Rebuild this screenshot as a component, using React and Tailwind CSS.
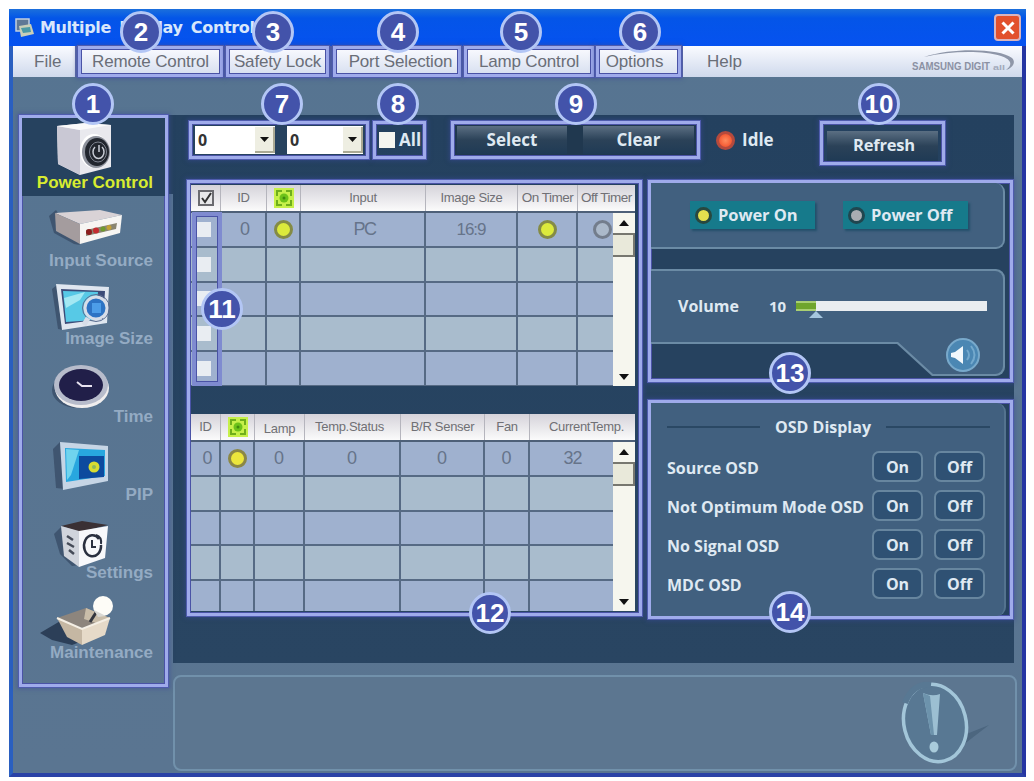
import React from 'react';

const Frame = ({ className = '', children }) => (
    <div className={`relative shrink-0 border-[3px] border-[#9fabeb] shadow-[0_0_0_1px_#4f5cae,0_0_4px_2px_#3a4a9a80,inset_0_0_0_1px_#4a53a6] ${className}`}>
        {children}
    </div>
);

const badges = [
    { n: 1, pos: 'left-[72px] top-[83px]' },
    { n: 2, pos: 'left-[120px] top-[11px]' },
    { n: 3, pos: 'left-[252px] top-[11px]' },
    { n: 4, pos: 'left-[377px] top-[11px]' },
    { n: 5, pos: 'left-[500px] top-[11px]' },
    { n: 6, pos: 'left-[619px] top-[11px]' },
    { n: 7, pos: 'left-[261px] top-[83px]' },
    { n: 8, pos: 'left-[377px] top-[83px]' },
    { n: 9, pos: 'left-[555px] top-[83px]' },
    { n: 10, pos: 'left-[858px] top-[83px]' },
    { n: 11, pos: 'left-[201px] top-[288px]' },
    { n: 12, pos: 'left-[469px] top-[592px]' },
    { n: 13, pos: 'left-[769px] top-[352px]' },
    { n: 14, pos: 'left-[769px] top-[591px]' },
];

const menu = [
    { label: 'Remote Control', box: 'ml-[3px] w-[145px]' },
    { label: 'Safety Lock', box: 'ml-[3px] w-[103px]' },
    { label: 'Port Selection', box: 'ml-[4px] w-[128px] pl-[7px]' },
    { label: 'Lamp Control', box: 'ml-[3px] w-[130px]' },
    { label: 'Options', box: 'ml-[2px] w-[85px] pr-[8px]' },
];

const PowerIcon = () => (
    <svg viewBox="21 116 144 56" className="h-14 w-36 shrink-0 overflow-visible">
        <path d="M57 124 L86 121 L111 123 L111 165 L80 173 L58 162 Z" fill="#e9e9ee" />
        <path d="M57 124 L80 128 L80 173 L58 162 Z" fill="#c9c8d4" />
        <path d="M57 124 L86 121 L111 123 L80 128 Z" fill="#fafafa" />
        <ellipse cx="94" cy="149" rx="14" ry="17" fill="#fff" />
        <ellipse cx="96" cy="150" rx="14" ry="16" fill="#8e929c" />
        <ellipse cx="97" cy="150" rx="12" ry="14" fill="#22262e" />
        <ellipse cx="98" cy="150" rx="8.500" ry="10" fill="none" stroke="#7f8490" strokeWidth="1" />
        <path d="M95 145 a5.500 6.500 0 1 0 7 0 M99 143 v7" fill="none" stroke="#c9cdd6" strokeWidth="1.500" />
    </svg>
);

const InputIcon = () => (
    <svg viewBox="21 194 144 56" className="h-14 w-36 shrink-0 overflow-visible">
        <path d="M49 214 L56 208 L80 243 L74 242 L54 231 Z" fill="#3f5570" />
        <path d="M55 211 L100 208 L122 213 L80 222 Z" fill="#d9d3d6" />
        <path d="M55 211 L80 222 L80 242 L56 229 Z" fill="#a49c9e" />
        <path d="M80 222 L122 213 L120 231 L80 242 Z" fill="#f7f5f2" />
        <path d="M86 228 L117 221 L116 227 L86 234 Z" fill="#8a8570" />
        <circle cx="89" cy="230" r="3" fill="#8c1d1d" />
        <circle cx="96" cy="228.500" r="3" fill="#c42c30" />
        <circle cx="103" cy="227" r="2.500" fill="#6f9a2d" />
        <circle cx="109" cy="225.500" r="2.500" fill="#c3a135" />
    </svg>
);

const ImageIcon = () => (
    <svg viewBox="21 272 144 56" className="h-14 w-36 shrink-0 overflow-visible">
        <path d="M52 287 L57 283 L64 328 L58 327 Z" fill="#3f5570" />
        <path d="M56 282 L109 285 L107 321 L62 328 Z" fill="#dfe6ef" />
        <path d="M61 287 L105 289 L103 317 L65 322 Z" fill="#3b4b78" />
        <path d="M63 289 L98 290 L95 318 L66 320 Z" fill="#57c9e6" />
        <path d="M64 296 L85 290 L80 298 L66 306 Z" fill="#a3e8f3" />
        <circle cx="96" cy="306" r="11" fill="#2d73c4" stroke="#d7dde8" strokeWidth="3" />
        <circle cx="96" cy="306" r="13.500" fill="none" stroke="#5a6c90" strokeWidth="1" />
        <rect x="92" y="301" width="9" height="10" fill="#4d9de8" />
        <path d="M88 316 L84 323" stroke="#d7dde8" strokeWidth="5" />
    </svg>
);

const TimeIcon = () => (
    <svg viewBox="21 350 144 56" className="h-14 w-36 shrink-0 overflow-visible">
        <ellipse cx="78" cy="388" rx="26" ry="18" fill="#3f5570" />
        <ellipse cx="82" cy="386" rx="27" ry="20" fill="#f0eeee" />
        <ellipse cx="81" cy="383" rx="27" ry="20" fill="#b7bccb" />
        <ellipse cx="81" cy="383" rx="22" ry="16" fill="#211f49" />
        <path d="M77 380 L82 384 L92 384" fill="none" stroke="#e8e3f0" strokeWidth="2" />
    </svg>
);

const PipIcon = () => (
    <svg viewBox="21 428 144 56" className="h-14 w-36 shrink-0 overflow-visible">
        <path d="M53 447 L60 440 L65 487 L56 486 Z" fill="#3f5570" />
        <path d="M60 440 L108 444 L108 479 L63 488 Z" fill="#c6d5e5" />
        <path d="M65 446 L105 448 L105 474 L66 480 Z" fill="#28a7df" />
        <path d="M66 447 L79 448 L71 473 L67 478 Z" fill="#70d4ee" />
        <path d="M79 454 L104 454 L104 475 L79 477 Z" fill="#0d4a9e" />
        <circle cx="94" cy="465" r="5.500" fill="#d7dc32" />
        <circle cx="94" cy="465" r="2" fill="#8fb95b" />
    </svg>
);

const SettingsIcon = () => (
    <svg viewBox="21 506 144 56" className="h-14 w-36 shrink-0 overflow-visible">
        <path d="M54 532 L62 524 L80 563 L72 564 L60 552 Z" fill="#3f5570" />
        <path d="M61 524 L82 519 L108 523 L80 530 Z" fill="#3a3034" />
        <path d="M61 524 L79 529 L79 565 L64 554 Z" fill="#d0d4dc" />
        <path d="M79 529 L108 524 L105 556 L79 565 Z" fill="#f7f8fb" />
        <path d="M99 537 a8.500 10.500 0 1 0 2 6" fill="none" stroke="#2a3040" strokeWidth="2.500" />
        <path d="M92 538 v7 h4 M96 533 q6 2 5 9" fill="none" stroke="#2a3040" strokeWidth="2" />
        <path d="M67 534 l6 4 M67 541 l7 4 M69 548 l5 4" stroke="#454b58" strokeWidth="2.500" />
    </svg>
);

const MaintenanceIcon = () => (
    <svg viewBox="21 587 144 56" className="h-14 w-36 shrink-0 overflow-visible">
        <path d="M40 632 L62 619 L80 641 L72 644 L52 639 Z" fill="#2c3f58" />
        <path d="M57 617 L86 607 L110 617 L82 627 Z" fill="#8d857d" />
        <path d="M86 607 L84 618 L96 622 L110 617 Z" fill="#c9bda9" />
        <path d="M90 621 L97 610" stroke="#33363e" strokeWidth="3" />
        <path d="M57 617 L82 628 L82 644 L67 636 Z" fill="#c5b7a3" />
        <path d="M82 628 L110 617 L105 634 L82 644 Z" fill="#e6dac8" />
        <path d="M57 617 L82 628 L110 617" fill="none" stroke="#f5efe4" strokeWidth="2" />
        <circle cx="103" cy="605" r="10" fill="#fdfcf7" />
        <path d="M94 609 L98 616 L106 615 Z" fill="#d9d8d3" />
    </svg>
);

const nav = [
    { label: 'Power Control', Icon: PowerIcon, style: 'bg-[#26425f] text-[#d8ec30]' },
    { label: 'Input Source', Icon: InputIcon, style: 'text-[#94abc3]' },
    { label: 'Image Size', Icon: ImageIcon, style: 'text-[#94abc3]' },
    { label: 'Time', Icon: TimeIcon, style: 'text-[#94abc3]' },
    { label: 'PIP', Icon: PipIcon, style: 'text-[#94abc3]' },
    { label: 'Settings', Icon: SettingsIcon, style: 'text-[#94abc3]' },
    { label: 'Maintenance', Icon: MaintenanceIcon, style: 'mt-[2px] text-[#94abc3]' },
];

const StatusIcon = () => (
    <svg viewBox="0 0 20 20" className="h-5 w-5">
        <rect width="20" height="20" fill="#c6f04a" />
        <path d="M3 8 V3 H8 M12 3 H17 V8 M17 12 V17 H12 M8 17 H3 V12" fill="none" stroke="#6fae1c" strokeWidth="2" />
        <circle cx="10" cy="10" r="4.500" fill="#6cc21a" />
        <circle cx="10" cy="10" r="1.500" fill="#3f8a10" />
    </svg>
);

const CheckIcon = () => (
    <svg viewBox="0 0 16 16" className="h-4 w-4">
        <rect x="1" y="1" width="14" height="14" fill="#e8e8ea" stroke="#6b6b70" strokeWidth="2" />
        <path d="M4 8 L7 12 L13 3" fill="none" stroke="#333" strokeWidth="2" />
    </svg>
);

const Lamp = ({ color = 'bg-[#dcea3c] border-[#848b45]' }) => (
    <span className={`block h-[19px] w-[19px] rounded-full border-[3px] ${color}`} />
);

const ScrollBar = () => (
    <div className="absolute right-0 top-0 bottom-0 flex w-[22px] flex-col items-center bg-[#f6f6ee]">
        <svg viewBox="0 0 10 6" className="mt-[7px] h-[6px] w-[10px]"><path d="M0 6 L5 0 L10 6 Z" fill="#111" /></svg>
        <div className="mt-[7px] h-[24px] w-full border-y-2 border-r-2 border-[#77776f] bg-[#e9e9da]" />
        <svg viewBox="0 0 10 6" className="mt-auto mb-[6px] h-[6px] w-[10px]"><path d="M0 0 L5 6 L10 0 Z" fill="#111" /></svg>
    </div>
);

const Grid = ({ cols, head, rows, height, className = '' }) => (
    <div className={`w-[444px] ${className}`}>
        <div className={`grid h-[26px] bg-linear-to-b from-[#d5d3da] to-[#fbfbfb] text-[13px] tracking-[-0.3px] text-[#707075] ${cols}`}>
            {head.map((h, i) => (
                <div key={i} className="flex items-center justify-center border-r border-[#b5b5bd] whitespace-nowrap last:border-r-0">{h}</div>
            ))}
        </div>
        <div className={`relative overflow-hidden border-t-2 border-[#4e6078] ${height}`}>
            {[0, 1, 2, 3, 4].map((r) => (
                <div key={r} className={`grid h-[34.8px] text-[18px] text-[#66748a] odd:bg-[#9fb1cf] even:bg-[#a9bccd] ${cols}`}>
                    {rows[r].map((c, i) => (
                        <div key={i} className="flex items-center justify-center border-r-2 border-b-2 border-[#566a84]">{c}</div>
                    ))}
                </div>
            ))}
            <ScrollBar />
        </div>
    </div>
);

const Box = () => <span className="mr-[3px] block h-[15px] w-[14px] bg-[#e9edf2]" />;

const deviceHead = [
    <CheckIcon />, 'ID', <StatusIcon />, 'Input', 'Image Size',
    <span className="text-[13.5px] tracking-[-0.5px]">On Timer</span>,
    <span className="text-[13.5px] tracking-[-0.5px]">Off Timer</span>,
];
const deviceRows = [
    [<Box />, <span className="pl-1">0</span>, <Lamp />, <span className="pl-1 tracking-[-1.5px]">PC</span>, <span className="text-[17px] tracking-[-1px]">16:9</span>, <Lamp />,
        <span className="mr-[6px]"><Lamp color="bg-[#abb9ca] border-[#737d8c]" /></span>],
    [<Box />, '', '', '', '', '', ''],
    [<Box />, '', '', '', '', '', ''],
    [<Box />, '', '', '', '', '', ''],
    [<Box />, '', '', '', '', '', ''],
];

const statusHead = ['ID', <StatusIcon />, <span className="pt-[3px]">Lamp</span>, <span className="pr-[6px]">Temp.Status</span>, 'B/R Senser', 'Fan', <span className="pl-2">CurrentTemp.</span>];
const empty = ['', '', '', '', '', '', ''];
const statusRows = [
    [<span className="pl-[5px]">0</span>, <Lamp color="bg-[#ece63c] border-[#8b8745]" />, '0', '0', '0', '0', <span className="mr-[18px] tracking-[-1px]">32</span>],
    empty, empty, empty, empty,
];

const DropDown = ({ className }) => (
    <div className={`flex h-[28px] items-center justify-between bg-white pl-[3px] text-[16px] font-bold text-[#333] ${className}`}>
        <span>0</span>
        <span className="flex h-[26px] w-[20px] items-center justify-center border-r-2 border-b-2 border-[#aaa994] bg-[#eeeee2]">
            <svg viewBox="0 0 9 5" className="h-[5px] w-[9px]"><path d="M0 0 H9 L4.500 5 Z" fill="#111" /></svg>
        </span>
    </div>
);

const OsdButton = ({ children }) => (
    <button className="h-[31px] w-[51px] rounded-[7px] border-2 border-[#67869f] bg-[#2f5173] text-[16px] leading-[26px]">{children}</button>
);

const dark = 'bg-linear-to-b from-[#5b6f83] via-[#2b4258] to-[#1f3a55]';
const bold = "font-['Open_Sans','Noto_Sans',sans-serif] font-bold";

const App = () => {
    return (
        <div className="relative h-[781px] w-[1034px] overflow-hidden bg-white pt-[9px] pl-[9px] font-['Liberation_Sans',Arial,sans-serif]">
            <div className="flex h-[768px] w-[1017px] flex-col border-r-[4px] border-b-[4px] border-l-[4px] border-r-[#2535a2] border-b-[#2b42a6] border-l-[#2a5fc0] bg-linear-to-b from-[#567491] to-[#5a7591]">
                <div className="-mx-[4px] flex h-[37px] shrink-0 items-center bg-linear-to-b from-[#1c6fdc] via-[#0455e8] via-25% to-[#0652f0] pr-[5px] pl-[6px]">
                    <svg viewBox="0 0 20 20" className="h-5 w-5">
                        <rect x="1" y="1" width="13" height="12" fill="#5f7896" stroke="#c2d0df" strokeWidth="1.500" />
                        <path d="M4 8 L16 6 L19 16 L6 19 Z" fill="#c9cfb8" />
                        <path d="M6 10 L15 9 L16 14 L8 15 Z" fill="#4b9aa6" />
                    </svg>
                    <span className="ml-[5px] font-['DejaVu_Sans',sans-serif] text-[16px] leading-none font-bold tracking-[-0.35px] whitespace-nowrap text-[#d9e7fb] [word-spacing:3px]">Multiple Display Control</span>
                    <button className="ml-auto flex h-[27px] w-[27px] items-center justify-center rounded-[4px] border-2 border-[#d8b3bd] bg-[#e2502c]">
                        <svg viewBox="0 0 14 14" className="h-[14px] w-[14px]"><path d="M1.500 1.500 L12.500 12.500 M12.500 1.500 L1.500 12.500" stroke="#fff" strokeWidth="3" /></svg>
                    </button>
                </div>

                <div className="flex h-[31px] shrink-0 bg-[#5d6aa8] text-[17px] text-[#6a6e78]">
                    <div className="flex w-[62px] items-center bg-linear-to-b from-[#fafbff] to-[#cfd9ec] pl-[21px]">File</div>
                    {menu.map((m) => (
                        <Frame key={m.label} className={`flex items-center justify-center bg-linear-to-b from-[#f8f9fe] to-[#d8e0f0] tracking-[-0.15px] whitespace-nowrap ${m.box}`}>{m.label}</Frame>
                    ))}
                    <div className="relative ml-[2px] flex flex-1 items-center justify-between bg-linear-to-b from-[#fafbff] to-[#cfd9ec] pr-[6px] pl-[24px]">
                        <span>Help</span>
                        <svg viewBox="0 0 106 28" className="h-7 w-[106px]">
                            <path d="M14 9 C45 -1 90 1 102 10 C107 15 101 21 96 22 C104 16 100 11 91 8 C72 2 40 3 14 9 Z" fill="#8e96a8" />
                            <text x="2" y="22" fontSize="11" fontWeight="bold" fill="#8b91a3" textLength="78" lengthAdjust="spacingAndGlyphs">SAMSUNG DIGIT</text>
                            <text x="83" y="22" fontSize="8" fontWeight="bold" fill="#a3aabb" textLength="12" lengthAdjust="spacingAndGlyphs">all</text>
                        </svg>
                    </div>
                </div>

                <div className="flex flex-1 pt-[38px] pl-[6px]">
                    <div className="flex w-[154px] shrink-0">
                        <Frame className="z-10 h-[572px] w-[149px]">
                            {nav.map(({ label, Icon, style }) => (
                                <div key={label} className={`flex h-[78px] flex-col items-end ${style}`}>
                                    <Icon />
                                    <span className="-mt-px pr-[12px] text-[17px] leading-5 font-bold whitespace-nowrap">{label}</span>
                                </div>
                            ))}
                        </Frame>
                        <div className="h-[79px] flex-1 bg-[#26425f]" />
                    </div>

                    <div className="flex flex-col">
                        <div className={`h-[548px] w-[841px] bg-linear-to-b from-[#24415f] to-[#294562] pt-[6px] pl-[14px] text-[#dfe9f2] ${bold}`}>
                            <div className="flex h-[44px] pl-[2px]">
                                <Frame className="flex h-[38px] w-[180px] items-center gap-[12px] bg-[#26425f] pl-[3px]">
                                    <DropDown className="w-[80px]" />
                                    <DropDown className="w-[76px]" />
                                </Frame>
                                <Frame className="ml-[4px] flex h-[38px] w-[53px] items-center pl-[3px] text-[17px]">
                                    <span className="mr-[4px] h-[16px] w-[16px] shrink-0 bg-[#f5f5f0]" />
                                    All
                                </Frame>
                                <Frame className="ml-[25px] flex h-[38px] w-[249px] items-center justify-between bg-[#20384f] px-[3px] text-[17px]">
                                    <button className={`h-[28px] w-[110px] ${dark}`}>Select</button>
                                    <button className={`h-[28px] w-[111px] ${dark}`}>Clear</button>
                                </Frame>
                                <span className="mt-[10px] ml-[16px] h-[19px] w-[19px] rounded-full border-[3px] border-[#b54a3d] bg-radial from-[#ff8a5c] to-[#ee3e1c]" />
                                <span className="mt-[7px] ml-[7px] text-[17px] leading-6">Idle</span>
                                <Frame className="mr-[69px] ml-auto flex h-[44px] w-[125px] items-center justify-center pt-[5px]">
                                    <button className={`h-[30px] w-[111px] pl-[3px] text-[16.5px] tracking-[-0.2px] ${dark}`}>Refresh</button>
                                </Frame>
                            </div>

                            <div className="mt-[15px] flex items-start">
                                <Frame className="h-[436px] w-[455px] pt-[2px] pl-[1px] font-['Liberation_Sans',Arial,sans-serif] font-normal">
                                    <Grid
                                        className="relative"
                                        cols="grid-cols-[30px_46px_34px_125px_92px_60px_57px]"
                                        head={deviceHead}
                                        rows={deviceRows}
                                        height="h-[175px]"
                                    />
                                    <div className="absolute top-[29px] left-[2px] h-[174px] w-[30px] border-[4px] border-[#7f8bd0] shadow-[inset_0_0_0_1px_#4a53a6]" />
                                    <Grid
                                        className="mt-[28px]"
                                        cols="grid-cols-[30px_34px_50px_96px_84px_45px_105px]"
                                        head={statusHead}
                                        rows={statusRows}
                                        height="h-[171px]"
                                    />
                                </Frame>

                                <div className="ml-[6px] flex flex-col">
                                    <Frame className="flex h-[202px] w-[365px] flex-col bg-[#26425f]">
                                        <div className="flex h-[66px] w-[354px] items-center gap-[28px] rounded-r-[9px] border-r-2 border-b-2 border-[#6b8ba5] bg-[#41607f] pl-[39px]">
                                            <button className="flex h-[28px] w-[125px] items-center bg-[#167a8b] pl-[5px] text-[16.5px] tracking-[-0.1px] whitespace-nowrap shadow-[2px_2px_2px_#24506b]">
                                                <span className="mr-[6px] h-[17px] w-[17px] shrink-0 rounded-full border-[3px] border-[#28483f] bg-[#e4e04e]" />
                                                Power On
                                            </button>
                                            <button className="flex h-[28px] w-[125px] items-center bg-[#167a8b] pl-[5px] text-[16.5px] tracking-[-0.1px] whitespace-nowrap shadow-[2px_2px_2px_#24506b]">
                                                <span className="mr-[6px] h-[17px] w-[17px] shrink-0 rounded-full border-[3px] border-[#20464f] bg-[#a9adb2]" />
                                                Power Off
                                            </button>
                                        </div>
                                        <div className="mt-[20px] h-[107px] w-[354px] rounded-r-[9px] bg-[#6b8ba5] p-[2px] pl-0 [clip-path:polygon(0_0,100%_0,100%_100%,281px_100%,246px_75px,0_75px)]">
                                            <div className="h-full rounded-r-[8px] bg-[#41607f] [clip-path:polygon(0_0,100%_0,100%_100%,282px_100%,247px_71px,0_71px)]">
                                                <div className="flex items-center pt-[23px] pl-[27px] text-[16px] leading-6">
                                                    <span className="w-[91px]">Volume</span>
                                                    <span className="w-[27px] text-[15px]">10</span>
                                                    <div className="relative h-[10px] w-[191px] bg-[#e9edf0]">
                                                        <div className="h-full w-[20px] border-y-2 border-[#a9cf72] bg-[#6fa52c]" />
                                                        <svg viewBox="0 0 14 7" className="absolute top-[10px] left-[13px] h-[7px] w-[14px]"><path d="M0 7 L7 0 L14 7 Z" fill="#a5c6de" /></svg>
                                                    </div>
                                                </div>
                                                <svg viewBox="0 0 34 34" className="mt-[20px] ml-[295px] h-[34px] w-[34px]">
                                                    <circle cx="17" cy="17" r="16" fill="#4b87b3" stroke="#78a9cb" strokeWidth="2" />
                                                    <path d="M5 15 L9 14 L17 8 V26 L9 20 L5 19 Z" fill="#f2f8fc" />
                                                    <path d="M21 12 q4 5 0 10 M25 8 q7 9 0 18" fill="none" stroke="#74a9cd" strokeWidth="2" />
                                                </svg>
                                            </div>
                                        </div>
                                    </Frame>

                                    <Frame className="mt-[18px] h-[219px] w-[365px] bg-[#26425f]">
                                        <div className="h-full w-[355px] rounded-r-[9px] border-r-2 border-[#54738f] bg-[#41607f] pl-[16px]">
                                            <div className="flex h-[48px] items-center text-[16px] whitespace-nowrap">
                                                <span className="h-[2px] w-[93px] bg-[#2a4864]" />
                                                <span className="w-[126px] text-center">OSD Display</span>
                                                <span className="h-[2px] w-[104px] bg-[#2a4864]" />
                                            </div>
                                            <div className="flex flex-col gap-[8px] text-[16px]">
                                                {['Source OSD', 'Not Optimum Mode OSD', 'No Signal OSD', 'MDC OSD'].map((label) => (
                                                    <div key={label} className="flex h-[31px] items-center">
                                                        <span className="w-[205px] pt-[3px] whitespace-nowrap">{label}</span>
                                                        <OsdButton>On</OsdButton>
                                                        <span className="w-[11px]" />
                                                        <OsdButton>Off</OsdButton>
                                                    </div>
                                                ))}
                                            </div>
                                        </div>
                                    </Frame>
                                </div>
                            </div>
                        </div>

                        <div className="mt-[12px] flex h-[96px] w-[844px] justify-end rounded-[8px] border-2 border-[#7191ab] bg-[#5c7690] pr-[22px]">
                            <svg viewBox="0 0 96 92" className="h-[92px] w-[96px]">
                                <path d="M38 72 L72 56 L92 48 L66 68 L46 82 Z" fill="#4c667f" />
                                <ellipse cx="38" cy="46" rx="31" ry="39" fill="#587893" stroke="#a3c6d9" strokeWidth="3.500" transform="rotate(-14 38 46)" />
                                <path d="M8 26 Q16 6 34 8" fill="none" stroke="#587893" strokeWidth="6" />
                                <path d="M26 16 Q35 20 43 17 L40 58 L34 58 Z" fill="#9cbfd2" />
                                <path d="M26 16 L34 58 L37 58 L33 19 Z" fill="#6d93ac" />
                                <ellipse cx="37" cy="70" rx="4.500" ry="5.500" fill="#a9cbdb" />
                            </svg>
                        </div>
                    </div>
                </div>
            </div>

            {badges.map((b) => (
                <div key={b.n} className={`absolute z-20 flex h-[42px] w-[42px] items-center justify-center rounded-full border-[3px] border-[#b3c6f5] bg-[#4353aa] text-[26px] leading-none font-bold text-white ${b.pos}`}>
                    {b.n}
                </div>
            ))}
        </div>
    );
};

export default App;
